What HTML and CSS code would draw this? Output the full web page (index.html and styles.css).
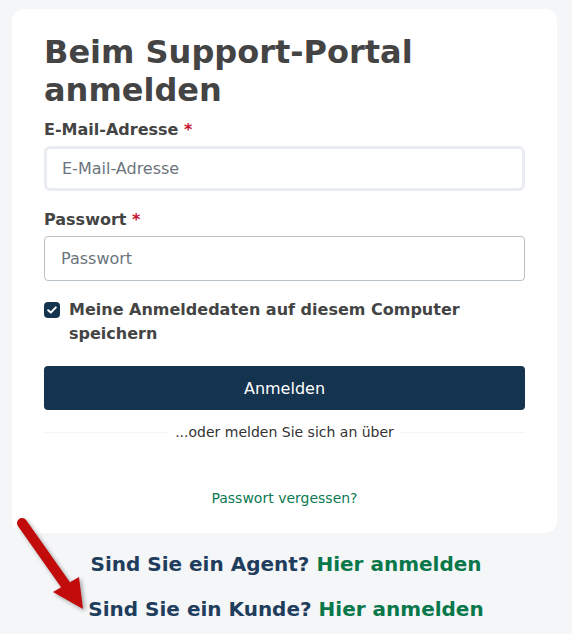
FILE: index.html
```html
<!DOCTYPE html>
<html lang="de">
  <head>
    <meta charset="utf-8">
    <link rel="stylesheet" href="styles.css">
  </head>
  <body>
    <div class="card">
      <h1>Beim Support-Portal anmelden</h1>

      <div class="group">
        <label class="label" for="email">E-Mail-Adresse <span class="req">*</span></label>
        <input class="field focused" id="email" type="text" placeholder="E-Mail-Adresse" autofocus>
      </div>

      <div class="group">
        <label class="label" for="pw">Passwort <span class="req">*</span></label>
        <input class="field" id="pw" type="password" placeholder="Passwort">
      </div>

      <div class="remember">
        <span class="check">
          <svg width="10" height="8" viewBox="0 0 10 8"><path d="M1.2 4.2 L3.8 6.6 L8.8 1.4" fill="none" stroke="#fff" stroke-width="2" stroke-linecap="round" stroke-linejoin="round"/></svg>
        </span>
        <span class="remember-text">Meine Anmeldedaten auf diesem Computer speichern</span>
      </div>

      <button class="submit">Anmelden</button>

      <div class="divider"><span>...oder melden Sie sich an über</span></div>

      <a class="forgot" href="#">Passwort vergessen?</a>
    </div>

    <p class="switch">Sind Sie ein Agent? <a href="#">Hier anmelden</a></p>
    <p class="switch second">Sind Sie ein Kunde? <a href="#">Hier anmelden</a></p>

    <svg class="arrow" width="100" height="110" viewBox="0 510 100 110">
      <line x1="22" y1="523" x2="65" y2="584" stroke="#c20b0b" stroke-width="10" stroke-linecap="round"/>
      <polygon points="53,592 79,577 83,609" fill="#c20b0b"/>
    </svg>
  </body>
</html>
```

FILE: styles.css
```css
body {
  margin: 0;
  padding: 9px 15px 0 12px;
  background: #f5f6f8;
  font-family: "DejaVu Sans", Verdana, sans-serif;
  color: #444;
  position: relative;
  height: 625px;
  overflow: hidden;
}

.card {
  background: #fff;
  border-radius: 12px;
  padding: 24px 32px 25px;
}

h1 {
  margin: 0 0 9px;
  font-size: 32px;
  line-height: 38px;
  font-weight: bold;
  color: #444;
}

.group {
  margin-bottom: 17px;
}

.label {
  display: block;
  font-size: 16px;
  line-height: 24px;
  font-weight: bold;
  margin-bottom: 4px;
}

.req {
  color: #c8102e;
}

.field {
  display: block;
  box-sizing: border-box;
  width: 100%;
  height: 45px;
  margin: 0;
  padding: 0 16px;
  font-family: "DejaVu Sans", Verdana, sans-serif;
  font-size: 16px;
  color: #333;
  background: #fff;
  border: 1px solid #b8c0c8;
  border-radius: 4px;
  outline: none;
}

.field.focused {
  border: 3px solid #e9ecf1;
  border-radius: 6px;
  padding: 0 15px;
}

.field::placeholder {
  color: #6c757d;
}

.remember {
  display: flex;
  align-items: flex-start;
  gap: 9px;
  margin-bottom: 20px;
}

.check {
  flex: none;
  width: 16px;
  height: 16px;
  margin-top: 4px;
  border-radius: 4px;
  background: #14334f;
  display: flex;
  align-items: center;
  justify-content: center;
}

.remember-text {
  font-size: 16px;
  line-height: 24px;
  font-weight: bold;
}

.submit {
  display: block;
  width: 100%;
  height: 44px;
  border: 0;
  border-radius: 4px;
  background: #14334e;
  color: #fff;
  font-family: "DejaVu Sans", Verdana, sans-serif;
  font-size: 16px;
  cursor: pointer;
}

.divider {
  display: flex;
  align-items: center;
  gap: 6px;
  margin: 12px 0 46px;
  font-size: 14px;
  line-height: 20px;
  color: #333;
}

.divider::before,
.divider::after {
  content: "";
  flex: 1;
  height: 1px;
  background: #f5f5f5;
}

.forgot {
  display: block;
  text-align: center;
  font-size: 14px;
  line-height: 20px;
  color: #0b7a52;
  text-decoration: none;
}

.switch {
  margin: 17px -15px 0 -12px;
  text-align: center;
  font-size: 20px;
  line-height: 28px;
  font-weight: bold;
  color: #1f3d5c;
}

.switch.second {
  margin-top: 17px;
}

.switch a {
  color: #08784a;
  text-decoration: none;
}

.arrow {
  position: absolute;
  left: 0;
  top: 510px;
  filter: drop-shadow(2px 2px 2px rgba(0, 0, 0, 0.35));
  pointer-events: none;
}
```
